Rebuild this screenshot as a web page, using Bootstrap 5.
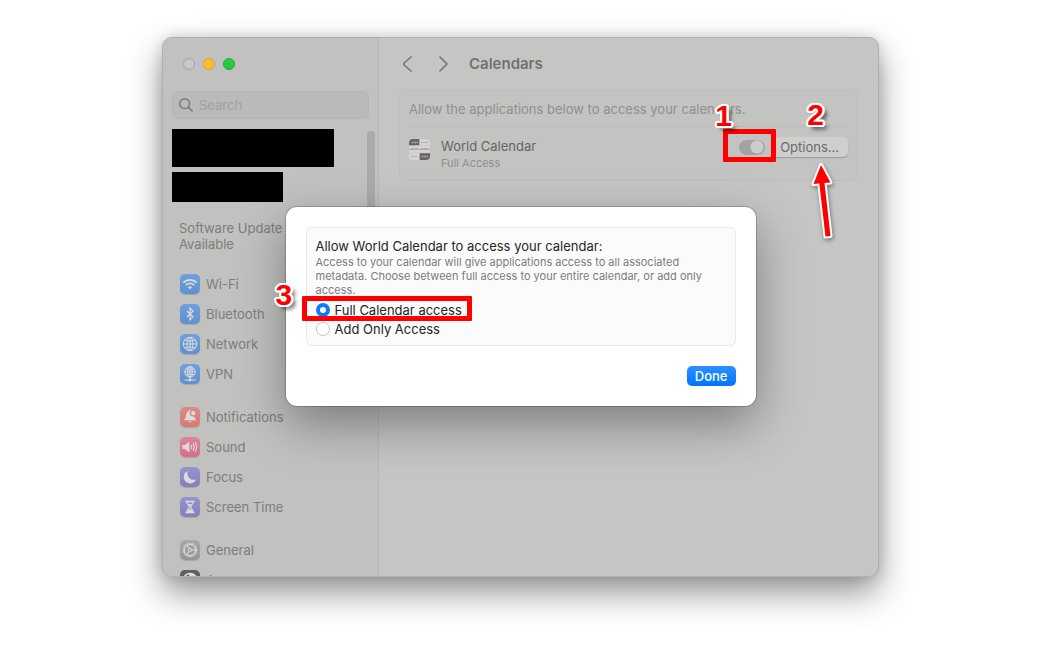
<!DOCTYPE html>
<html lang="en">
<head>
<meta charset="utf-8">
<meta name="viewport" content="width=device-width, initial-scale=1">
<title>Calendars</title>
<link href="https://cdn.jsdelivr.net/npm/bootstrap@5.3.0/dist/css/bootstrap.min.css" rel="stylesheet">
<script src="https://cdn.jsdelivr.net/npm/bootstrap@5.3.0/dist/js/bootstrap.bundle.min.js"></script>
<style>
  body { font-family: Inter, "Liberation Sans", sans-serif; font-size: 13px; line-height: 16px; color: #7d7d7c; background: #fff; padding: 37px 161px 73px 162px; }
  .win { min-height: 0; background: #c5c5c3; border: 1px solid #b0b0af; border-radius: 10px; box-shadow: 0 16px 34px rgba(0,0,0,.42), 0 0 14px rgba(0,0,0,.14); }
  .win-body { border-radius: 9px; }
  .side { flex: 0 0 216px; min-width: 0; background: #c1c1bf; border-right: 1px solid #b8b8b7; padding: 20px 9px 0; }
  .lights { gap: 8px; padding-left: 11px; margin-bottom: 21px; }
  .light { width: 12px; height: 12px; padding: 0; border-radius: 50%; border: 1px solid #a5a5a4; background: #c8c8c7; }
  .light-min { background: #ffbd2e; border-color: #e2a02b; }
  .light-max { background: #28c840; border-color: #1fac32; }
  .search { height: 28px; background: #bababa; border: 1px solid #b5b5b5; border-radius: 6px; padding: 0 6px; margin-bottom: 10px; }
  .search input { background: none; border: 0; outline: 0; padding: 0; font-size: 13px; width: 0; min-width: 0; margin-left: 6px; }
  .search input::placeholder { color: #a1a1a1; opacity: 1; }
  .bar { background: #000; }
  .bar-name { width: 162px; height: 38px; margin-bottom: 5px; }
  .bar-id { width: 111px; height: 30px; margin-bottom: 18px; }
  .update { padding-left: 7px; margin-bottom: 17px; width: 120px; }
  .side-group { margin-bottom: 13px; padding-left: 8px; }
  .side-group a { height: 30px; gap: 6px; color: inherit; text-decoration: none; }
  .ico { width: 20px; height: 20px; border-radius: 5px; box-shadow: 0 1px 1px rgba(0,0,0,.14); flex: none; color: #dcdcdc; }
  .ico-blue { background: linear-gradient(#709fdb, #5e91d0); }
  .ico-red { background: linear-gradient(#dc8b87, #d87975); }
  .ico-pink { background: linear-gradient(#d9889b, #d86d88); }
  .ico-violet { background: linear-gradient(#9794cb, #8380bd); }
  .ico-gray { background: linear-gradient(#a9a9ab, #949496); }
  .ico-dark { background: #606060; }
  .scroller { top: 93px; right: 3px; width: 8px; height: 45%; border-radius: 4px; background: #aaaaa9; }
  .pane { padding: 14px 20px; min-width: 0; }
  .pane-head { height: 24px; margin-bottom: 14px; }
  .pane-head button { border: 0; background: none; padding: 0; width: 12px; height: 24px; color: #747473; }
  .pane-head h1 { font-size: 15px; line-height: 24px; font-weight: 600; color: #717170; margin: 0 0 0 18px; }
  .panel { border: 1px solid #bebebd; border-radius: 6px; background: #c3c3c1; padding: 0 9px; }
  .panel-note { height: 36px; color: #8f8f8e; border-bottom: 1px solid #bbbbba; white-space: nowrap; }
  .app-row { padding: 10px 0 9px; gap: 11px; }
  .app-icon { margin-top: 2px; }
  .app-name { color: #656565; line-height: 18px; }
  .app-sub { font-size: 11px; line-height: 16px; color: #8f8f8e; }
  .controls { height: 20px; gap: 6px; }
  .toggle { width: 26px; height: 15px; }
  .toggle input { appearance: none; display: block; width: 26px; height: 15px; margin: 0; border-radius: 8px; border: 0; background: radial-gradient(circle at 18px 7px, #cdcdcc 6px, #a3a3a2 7px, transparent 8px), #a3a3a2; }
  .options { border: 0; border-radius: 5px; height: 20px; padding: 0 9px; background: #cfcfce; color: #6b6b6a; box-shadow: 0 1px 1px rgba(0,0,0,.22); line-height: 20px; font-size: 13px; }
  .sheet { width: 470px; top: 169px; background: #fff; border-radius: 11px; padding: 20px; box-shadow: 0 0 0 1px rgba(0,0,0,.2), 0 18px 48px rgba(0,0,0,.36); color: #262626; }
  .sheet-panel { border: 1px solid #e8e8e8; border-radius: 6px; background: #fbfbfb; padding: 9px 9px 7px; margin-bottom: 20px; }
  .sheet-panel legend { font-size: 13px; line-height: 18px; margin: 0; float: left; }
  .sheet-panel p { clear: both; font-size: 11px; line-height: 14px; color: #7c7c7c; margin: 0 0 3px; }
  .choice { height: 19px; gap: 5px; }
  .choice input { appearance: none; width: 14px; height: 14px; margin: 0; border: 1px solid #c4c4c4; border-radius: 50%; background: #fff; }
  .choice input:checked { border: 4px solid #0a7aff; }
  .done { border: 0; border-radius: 5px; padding: 0 8px; height: 20px; line-height: 20px; font-size: 13px; font-weight: 500; color: #fff; background: linear-gradient(#2a90ff, #0074fb); }
  .frame { border: 5px solid #fe0000; border-radius: 1px; pointer-events: none; }
  .frame-toggle { inset: -11px -11px -7px -16px; }
  .frame-full { inset: -4px auto -2px -14px; width: 170px; }
  .step { font: 700 30px/30px "Liberation Sans", Arial, sans-serif; color: #fe0000; pointer-events: none;
    text-shadow: 2px 0 #fff, -2px 0 #fff, 0 2px #fff, 0 -2px #fff, 1px 2px #fff, -1px 2px #fff, 1px -2px #fff, -1px -2px #fff, 2px 1px #fff, -2px 1px #fff, 2px -1px #fff, -2px -1px #fff, 4px 4px 4px rgba(0,0,0,.65); }
  .step-1 { left: -24px; top: -39px; }
  .step-2 { left: 36px; top: -37px; }
  .step-3 { left: -40px; top: -20px; }
  .arrow { left: 36px; top: 21px; overflow: visible; filter: drop-shadow(1px 2px 2px rgba(0,0,0,.4)); pointer-events: none; }
</style>
</head>
<body class="vh-100 d-flex flex-column">
<div class="win flex-fill position-relative d-flex">
  <div class="win-body d-flex flex-fill overflow-hidden">
    <aside class="side position-relative">
      <div class="lights d-flex">
        <button class="light" aria-label="Close"></button>
        <button class="light light-min" aria-label="Minimize"></button>
        <button class="light light-max" aria-label="Zoom"></button>
      </div>
      <label class="search d-flex align-items-center">
        <svg width="14" height="14" viewBox="0 0 14 14" fill="none" stroke="#7b7b7a" stroke-width="1.5" stroke-linecap="round"><circle cx="5.7" cy="5.7" r="4.9"/><path d="M9.4 9.4 13.2 13.1"/></svg>
        <input class="flex-fill" type="search" placeholder="Search" aria-label="Search">
      </label>
      <div class="bar bar-name"></div>
      <div class="bar bar-id"></div>
      <div class="update">Software Update Available</div>
      <nav>
        <div class="side-group">
          <a href="#" class="d-flex align-items-center"><svg class="ico ico-blue" viewBox="0 0 20 20" fill="none" stroke="currentColor" stroke-width="1.8"><path d="M3.3 8.6a9.5 9.5 0 0 1 13.4 0M5.8 11.1a6 6 0 0 1 8.4 0"/><path d="M10 15.3 7.9 13.2a3 3 0 0 1 4.2 0z" fill="currentColor" stroke="none"/></svg>Wi-Fi</a>
          <a href="#" class="d-flex align-items-center"><svg class="ico ico-blue" viewBox="0 0 20 20" fill="none" stroke="currentColor" stroke-width="1.2"><path d="M6.8 7 13 12.8 10 15.8V4.2l3 3L6.8 13"/></svg>Bluetooth</a>
          <a href="#" class="d-flex align-items-center"><svg class="ico ico-blue" viewBox="0 0 20 20" fill="none" stroke="currentColor" stroke-width="1"><circle cx="10" cy="10" r="6.7"/><ellipse cx="10" cy="10" rx="3" ry="6.7"/><path d="M3.3 10h13.4M10 3.3v13.4M4.8 6q5.2 2.6 10.4 0M4.8 14q5.2-2.6 10.4 0"/></svg>Network</a>
          <a href="#" class="d-flex align-items-center"><svg class="ico ico-blue" viewBox="0 0 20 20" fill="none" stroke="currentColor" stroke-width="1"><circle cx="10" cy="7.8" r="5.2"/><ellipse cx="10" cy="7.8" rx="2.3" ry="5.2"/><path d="M4.8 7.8h10.4M10 2.6V15M6 4.7q4 2 8 0M6 10.9q4-2 8 0"/><path d="M4.5 16h11" stroke-width="1.2"/><circle cx="10" cy="16" r="1.4" fill="currentColor" stroke="none"/></svg>VPN</a>
        </div>
        <div class="side-group">
          <a href="#" class="d-flex align-items-center"><svg class="ico ico-red" viewBox="0 0 20 20" fill="currentColor"><path d="M10.900 3.700a1 1 0 0 0-1.900.3C6.800 4.700 6.200 6.500 6 9c-.1 2-1.700 3-2 4.200h12c-.2-1.200-1.700-2-2-3.800a3.300 3.300 0 0 1-3.100-5.700zM8.300 14.200h3.500a1.800 1.800 0 0 1-3.500 0z"/><circle cx="13.300" cy="6.200" r="2.100"/></svg>Notifications</a>
          <a href="#" class="d-flex align-items-center"><svg class="ico ico-pink" viewBox="0 0 20 20" fill="none" stroke="currentColor" stroke-width="1.100" stroke-linecap="round"><path d="M3 8.200h2.200L9 5v10l-3.800-3.200H3z" fill="currentColor" stroke-width=".6"/><path d="M11.200 8.200q1.100 1.800 0 3.600M13.200 6.900q2 3.100 0 6.200M15.200 5.500q2.900 4.500 0 9"/></svg>Sound</a>
          <a href="#" class="d-flex align-items-center"><svg class="ico ico-violet" viewBox="0 0 20 20" fill="currentColor"><path d="M7.800 4a6.400 6.400 0 1 0 8.300 8.200A6.300 6.300 0 0 1 7.800 4z"/></svg>Focus</a>
          <a href="#" class="d-flex align-items-center"><svg class="ico ico-violet" viewBox="0 0 20 20" fill="none" stroke="currentColor" stroke-width="1.200"><path d="M5.500 4.500h9M5.500 15.500h9" stroke-width="1.500"/><path d="M6.800 4.500c0 3 2.400 3.500 2.400 5.500s-2.400 2.500-2.400 5.500M13.200 4.500c0 3-2.400 3.500-2.400 5.500s2.400 2.500 2.400 5.500"/><path d="M8 7h4l-2 2.500zM7.500 15q0-2 2.500-3 2.500 1 2.500 3z" fill="currentColor" stroke="none"/></svg>Screen Time</a>
        </div>
        <div class="side-group">
          <a href="#" class="d-flex align-items-center"><svg class="ico ico-gray" viewBox="0 0 20 20" fill="none" stroke="currentColor"><circle cx="10" cy="10" r="6.600" stroke-width="1.200" stroke-dasharray="1.100 .63"/><circle cx="10" cy="10" r="5.600" stroke-width="1"/><circle cx="10" cy="10" r="1.600" stroke-width=".9"/><path d="M11.600 10h4M9.200 8.600 7.200 5.200M9.200 11.400l-2 3.400" stroke-width="1"/></svg>General</a>
          <a href="#" class="d-flex align-items-center"><svg class="ico ico-dark" viewBox="0 0 20 20" fill="none" stroke="currentColor" stroke-width="1.500"><circle cx="10" cy="10" r="6.500"/><path d="M10 3.500v13a6.500 6.500 0 0 0 0-13z" fill="currentColor"/></svg>Appearance</a>
        </div>
      </nav>
      <div class="scroller position-absolute"></div>
    </aside>
    <main class="pane flex-fill">
      <div class="pane-head d-flex align-items-center">
        <button class="ms-1" aria-label="Back"><svg class="d-block" width="12" height="24" fill="none" stroke="currentColor" stroke-width="1.600" stroke-linecap="round" stroke-linejoin="round"><path d="M8 5 0 12l8 7" transform="translate(0 0)"/></svg></button>
        <button class="ms-4" aria-label="Forward"><svg class="d-block" width="12" height="24" fill="none" stroke="currentColor" stroke-width="1.600" stroke-linecap="round" stroke-linejoin="round"><path d="M1 5l7 7-7 7"/></svg></button>
        <h1>Calendars</h1>
      </div>
      <section class="panel">
        <div class="panel-note d-flex align-items-center">Allow the applications below to access your calendars.</div>
        <div class="app-row d-flex align-items-start">
          <svg class="app-icon flex-shrink-0" width="21" height="21" viewBox="0 0 21 21"><rect width="21" height="21" rx="4" fill="#d4d4d4"/><path d="M4 0h6.500v6.500H0V4a4 4 0 0 1 4-4zM10.500 14H21v3a4 4 0 0 1-4 4h-6.500z" fill="#646464"/><path d="M0 10.500h21" stroke="#cf9c9c"/><path d="M2.500 3.500H9M12.500 17.500H19" stroke="#aaa" stroke-width="1.500" stroke-dasharray="2 .5"/><path d="M12 3.500h7M2 17.500h6M2 9.500h7M12 9.500h7" stroke="#aaa" stroke-dasharray="2 .5"/><path d="M10.500 0v21M0 6.500h21M0 14h21" stroke="#c2c2c2" stroke-width=".5"/></svg>
          <div class="flex-fill"><div class="app-name">World Calendar</div><div class="app-sub">Full Access</div></div>
          <div class="controls d-flex align-items-center">
            <div class="toggle position-relative">
              <input type="checkbox" role="switch" checked aria-label="World Calendar">
              <span class="frame frame-toggle position-absolute z-1"></span>
              <span class="step step-1 position-absolute z-1">1</span>
            </div>
            <div class="position-relative">
              <button class="options d-block">Options...</button>
              <span class="step step-2 position-absolute">2</span>
              <svg class="arrow position-absolute" width="28" height="84" viewBox="0 0 28 84"><path d="M14 7 6.500 26l5.800-.5L18.500 78.500l5-.6-6-53 6-.5z" fill="#fe0000" stroke="#fff" stroke-width="4" stroke-linejoin="round" paint-order="stroke"/></svg>
            </div>
          </div>
        </div>
      </section>
    </main>
  </div>
  <div class="sheet position-absolute start-50 translate-middle-x" role="dialog" aria-label="Calendar access">
    <fieldset class="sheet-panel">
      <legend>Allow World Calendar to access your calendar:</legend>
      <p>Access to your calendar will give applications access to all associated metadata. Choose between full access to your entire calendar, or add only access.</p>
      <div class="choice d-flex align-items-center position-relative">
        <input type="radio" name="access" id="full" checked><label for="full">Full Calendar access</label>
        <span class="frame frame-full position-absolute"></span>
        <span class="step step-3 position-absolute">3</span>
      </div>
      <div class="choice d-flex align-items-center">
        <input type="radio" name="access" id="add"><label for="add">Add Only Access</label>
      </div>
    </fieldset>
    <div class="d-flex justify-content-end"><button class="done">Done</button></div>
  </div>
</div>
</body>
</html>
